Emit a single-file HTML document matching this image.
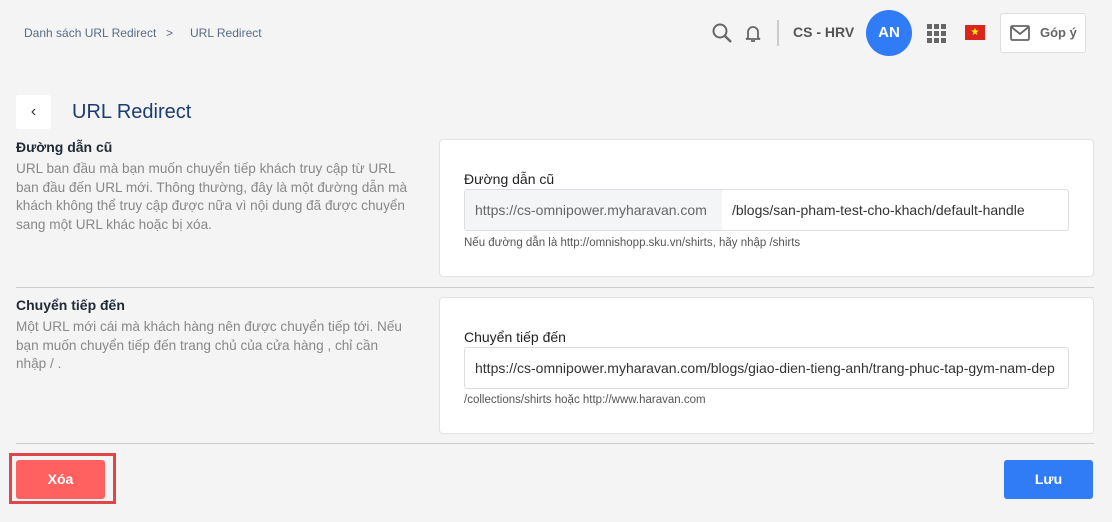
<!DOCTYPE html>
<html><head><meta charset="utf-8"><style>
*{box-sizing:border-box;margin:0;padding:0}
body{width:1112px;height:522px;background:#f4f4f5;font-family:"Liberation Sans",sans-serif;position:relative;overflow:hidden;color:#333}
.abs{position:absolute}
.bc{top:26px;font-size:12px;color:#5a6b85}
.card{background:#fff;border:1px solid #e3e3e6;border-radius:4px;position:absolute;left:439px;width:655px}
.lbl{font-size:14px;color:#222}
.inp{position:absolute;left:24px;right:24px;height:42px;border:1px solid #dcdde0;border-radius:3px;font-size:14px;color:#333;display:flex;align-items:center;overflow:hidden;white-space:nowrap}
.hint{font-size:11.5px;color:#555}
.h{font-size:14px;font-weight:bold;color:#212b36}
.d{font-size:13.6px;color:#888;line-height:18.5px;white-space:nowrap}
</style></head><body>
<div class="abs bc" style="left:24px">Danh sách URL Redirect</div>
<div class="abs bc" style="left:166px">&gt;</div>
<div class="abs bc" style="left:190px">URL Redirect</div>

<svg class="abs" style="left:711px;top:22px" width="22" height="22" viewBox="0 0 22 22"><circle cx="9" cy="9" r="6.5" fill="none" stroke="#666" stroke-width="2"/><path d="M14 14l6 6" stroke="#666" stroke-width="2.4"/></svg>
<svg class="abs" style="left:744px;top:22px" width="18" height="22" viewBox="0 0 18 22"><path d="M4 16V10a5 5 0 0 1 10 0v6l2 1H2z" fill="none" stroke="#666" stroke-width="1.8"/><path d="M7 19h4" stroke="#666" stroke-width="1.8"/></svg>
<div class="abs" style="left:777px;top:20px;width:2px;height:26px;background:#ccc"></div>
<div class="abs" style="left:793px;top:24px;font-size:14px;font-weight:bold;color:#555">CS - HRV</div>
<div class="abs" style="left:866px;top:10px;width:46px;height:46px;border-radius:50%;background:#2f7cf6;color:#fff;font-weight:bold;font-size:15px;text-align:center;line-height:46px">AN</div>
<svg class="abs" style="left:927px;top:24px" width="19" height="19"><g fill="#666"><rect x="0" y="0" width="5" height="5"/><rect x="7" y="0" width="5" height="5"/><rect x="14" y="0" width="5" height="5"/><rect x="0" y="7" width="5" height="5"/><rect x="7" y="7" width="5" height="5"/><rect x="14" y="7" width="5" height="5"/><rect x="0" y="14" width="5" height="5"/><rect x="7" y="14" width="5" height="5"/><rect x="14" y="14" width="5" height="5"/></g></svg>
<div class="abs" style="left:965px;top:25px;width:20px;height:15px;background:#da251d;color:#ff0;font-size:10px;text-align:center;line-height:15px">★</div>
<div class="abs" style="left:1000px;top:13px;width:86px;height:40px;background:#fff;border:1px solid #ddd;border-radius:3px"></div>
<svg class="abs" style="left:1010px;top:25px" width="20" height="16"><rect x="1" y="1" width="18" height="14" rx="1.5" fill="none" stroke="#666" stroke-width="1.8"/><path d="M1.5 2l8.5 7 8.5-7" fill="none" stroke="#666" stroke-width="1.8"/></svg>
<div class="abs" style="left:1040px;top:25px;font-size:13px;font-weight:bold;color:#666">Góp ý</div>

<div class="abs" style="left:16px;top:95px;width:35px;height:34px;background:#fff;border-radius:3px;text-align:center;line-height:34px;font-size:16px;color:#333">‹</div>
<div class="abs" style="left:72px;top:101px;font-size:20px;color:#1c3d6e">URL Redirect</div>

<div class="abs h" style="left:16px;top:139px">Đường dẫn cũ</div>
<div class="abs d" style="left:16px;top:160px">URL ban đầu mà bạn muốn chuyển tiếp khách truy cập từ URL<br>ban đầu đến URL mới. Thông thường, đây là một đường dẫn mà<br>khách không thể truy cập được nữa vì nội dung đã được chuyển<br>sang một URL khác hoặc bị xóa.</div>

<div class="card" style="top:139px;height:138px">
 <div class="abs lbl" style="left:24px;top:31px">Đường dẫn cũ</div>
 <div class="inp" style="top:49px"><div style="background:#f4f5f7;height:100%;padding:0 10px;line-height:40px;color:#666;width:257px">https://cs-omnipower.myharavan.com</div><div style="padding-left:10px">/blogs/san-pham-test-cho-khach/default-handle</div></div>
 <div class="abs hint" style="left:24px;top:97px">Nếu đường dẫn là http://omnishopp.sku.vn/shirts, hãy nhập /shirts</div>
</div>

<div class="abs" style="left:16px;top:287px;width:1078px;height:1px;background:#ccc"></div>

<div class="abs h" style="left:16px;top:297px">Chuyển tiếp đến</div>
<div class="abs d" style="left:16px;top:318px">Một URL mới cái mà khách hàng nên được chuyển tiếp tới. Nếu<br>bạn muốn chuyển tiếp đến trang chủ của cửa hàng , chỉ cần<br>nhập / .</div>

<div class="card" style="top:297px;height:137px">
 <div class="abs lbl" style="left:24px;top:31px">Chuyển tiếp đến</div>
 <div class="inp" style="top:49px;padding-left:10px">https://cs-omnipower.myharavan.com/blogs/giao-dien-tieng-anh/trang-phuc-tap-gym-nam-dep</div>
 <div class="abs hint" style="left:24px;top:96px">/collections/shirts hoặc http://www.haravan.com</div>
</div>

<div class="abs" style="left:16px;top:443px;width:1078px;height:1px;background:#ccc"></div>

<div class="abs" style="left:9px;top:453px;width:107px;height:51px;border:3px solid #e0454a"></div>
<div class="abs" style="left:16px;top:460px;width:89px;height:39px;background:#ff6161;border-radius:3px;color:#fff;font-weight:bold;font-size:14px;text-align:center;line-height:39px">Xóa</div>
<div class="abs" style="left:1004px;top:460px;width:89px;height:39px;background:#2f7cf6;border-radius:3px;color:#fff;font-weight:bold;font-size:14px;text-align:center;line-height:39px">Lưu</div>
</body></html>
